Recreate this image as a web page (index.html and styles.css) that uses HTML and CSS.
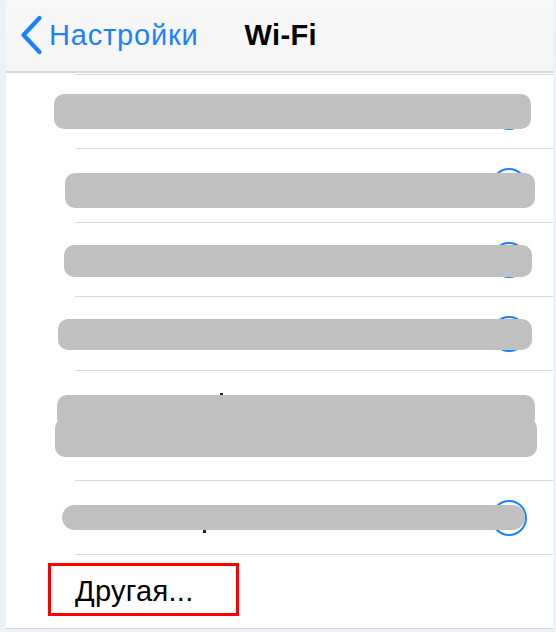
FILE: index.html
```html
<!DOCTYPE html>
<html lang="ru">
<head>
<meta charset="utf-8">
<title>Wi-Fi</title>
<link rel="stylesheet" href="styles.css">
</head>
<body>
<div class="screen">
  <header class="nav">
    <a class="back">
      <svg class="chevron" width="24" height="40" viewBox="0 0 24 40" aria-hidden="true">
        <path d="M20.5 3 L4.5 20 L20.5 37" fill="none" stroke="#1a82fb" stroke-width="4.2" stroke-linecap="round" stroke-linejoin="round"/>
      </svg>
      <span class="back-label">Настройки</span>
    </a>
    <h1 class="title">Wi-Fi</h1>
  </header>
  <div class="list">
    <div class="row">
      <span class="info"></span>
      <span class="blob b1"></span>
    </div>
    <div class="row">
      <span class="info"></span>
      <span class="blob b2"></span>
    </div>
    <div class="row">
      <span class="info"></span>
      <span class="blob b3"></span>
    </div>
    <div class="row">
      <span class="info"></span>
      <span class="blob b4"></span>
    </div>
    <div class="row tall">
      <span class="mark m5"></span>
      <span class="blob b5a"></span>
      <span class="blob b5b"></span>
    </div>
    <div class="row">
      <span class="info"></span>
      <span class="mark m6"></span>
      <span class="blob b6"></span>
    </div>
    <div class="row other">
      <span class="other-label">Другая...</span>
    </div>
  </div>
</div>
</body>
</html>
```

FILE: styles.css
```css
html, body {
  margin: 0;
  padding: 0;
}

body {
  background: #edf1f9;
  height: 632px;
  overflow: hidden;
  font-family: "Liberation Sans", Arial, sans-serif;
}

.screen {
  margin: 0 3px 0 6px;
}

.nav {
  height: 71px;
  background: linear-gradient(#f8f8f8, #f5f5f5);
  border-bottom: 2px solid #d9d9d9;
  display: flex;
  align-items: center;
  position: relative;
}

.back {
  display: flex;
  align-items: center;
  margin-left: 13px;
  color: #1a82fb;
}

.chevron {
  display: block;
  margin-top: -1px;
}

.back-label {
  font-size: 29px;
  letter-spacing: 0.8px;
  margin-left: 6px;
  line-height: 1;
}

.title {
  margin: 0 0 0 46px;
  font-size: 29px;
  letter-spacing: 0.4px;
  font-weight: 700;
  color: #000;
  line-height: 1;
}

.list {
  background: #fff;
  padding-top: 1px;
  border-bottom: 1px solid #cfcfcf;
}

.row {
  position: relative;
  height: 74px;
  display: flex;
  align-items: center;
  justify-content: flex-end;
}

.row::before {
  content: "";
  position: absolute;
  left: 69px;
  right: 0;
  top: 0;
  height: 1px;
  background: #d9d9d9;
}

.row.tall {
  height: 110px;
}

.info {
  width: 36px;
  height: 36px;
  box-sizing: border-box;
  border: 2px solid #1a84ff;
  border-radius: 50%;
  margin-right: 26px;
  margin-top: 1px;
}

.blob {
  position: absolute;
  background: #c0c0c0;
  border-radius: 10px;
}

.b1 { left: 48px; top: 20px; width: 477px; height: 35px; }
.b2 { left: 59px; top: 25px; width: 470px; height: 35px; }
.b3 { left: 58px; top: 23px; width: 468px; height: 32px; }
.b4 { left: 52px; top: 23px; width: 474px; height: 31px; }
.b5a { left: 51px; top: 25px; width: 478px; height: 33px; }
.b5b { left: 49px; top: 48px; width: 482px; height: 39px; }
.b6 { left: 56px; top: 25px; width: 463px; height: 25px; border-radius: 13px; }

.mark {
  position: absolute;
  background: #222;
}

.m5 { left: 214px; top: 23px; width: 3px; height: 2px; }
.m6 { left: 197px; top: 50px; width: 3px; height: 3px; }

.row.other {
  justify-content: flex-start;
  align-items: flex-start;
}

.other-label {
  margin: 9px 0 0 42px;
  box-sizing: border-box;
  width: 191px;
  height: 53px;
  border: 3px solid #f00;
  padding: 4px 0 0 24px;
  font-size: 29px;
  letter-spacing: 0.3px;
  line-height: 43px;
  color: #000;
}
```
